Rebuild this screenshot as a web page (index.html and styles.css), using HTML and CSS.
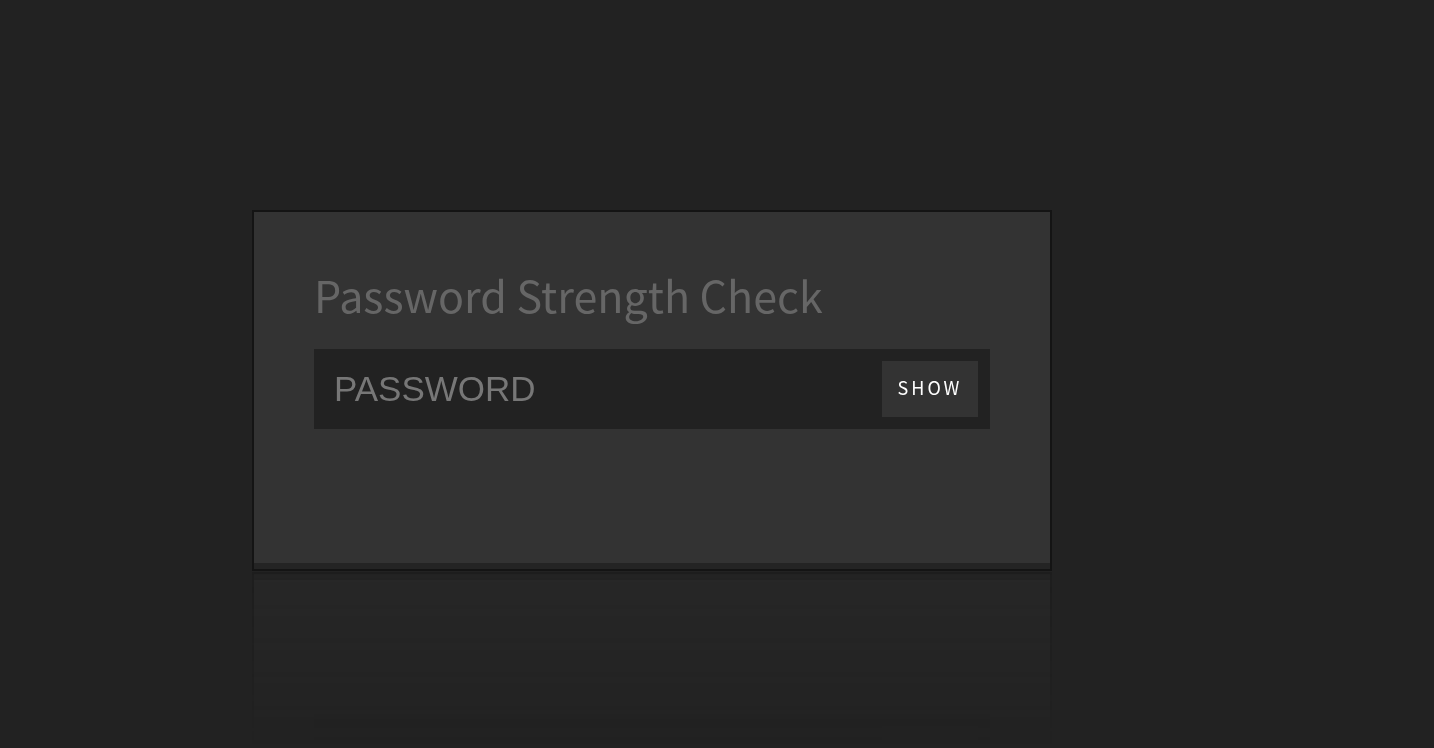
FILE: index.html
```html
<!DOCTYPE html>
<html lang="en">
<head>
<meta charset="utf-8">
<title>Password Strength Check</title>
<link rel="stylesheet" href="styles.css">
</head>
<body>
<div class="card">
  <h1 class="title">Password Strength Check</h1>
  <div class="field">
    <input class="input" type="password" placeholder="PASSWORD">
    <button class="show" type="button">SHOW</button>
  </div>
  <div class="spacer"></div>
  <div class="meter"></div>
</div>
</body>
</html>
```

FILE: styles.css
```css
html, body {
  margin: 0;
  padding: 0;
  background: #222222;
  height: 100%;
  overflow: hidden;
}
body {
  padding: 210px 0 0 252px;
  box-sizing: border-box;
}
.card {
  width: 800px;
  box-sizing: border-box;
  border: 2px solid #141414;
  background: #333333;
  padding: 56px 0 0;
  display: flex;
  flex-direction: column;
  -webkit-box-reflect: below 1px linear-gradient(transparent 52%, rgba(255,255,255,0.3));
}
.title {
  margin: 0 60px 29px 60px;
  font-family: "Noto Sans CJK KR", "Open Sans", sans-serif;
  font-weight: 400;
  font-size: 43px;
  line-height: 52px;
  color: #666666;
}
.field {
  margin: 0 60px;
  height: 80px;
  background: #222222;
  display: flex;
  align-items: center;
  padding: 0 12px 0 20px;
  box-sizing: border-box;
}
.input {
  flex: 1;
  min-width: 0;
  background: transparent;
  border: 0;
  outline: none;
  padding: 0;
  font-family: "Liberation Sans", Arial, sans-serif;
  font-size: 35px;
  color: #777777;
}
.input::placeholder {
  color: #777777;
}
.show {
  width: 96px;
  height: 56px;
  border: 0;
  padding: 0 0 4px 0;
  background: #333333;
  color: #ffffff;
  font-family: "Noto Sans CJK KR", "Open Sans", sans-serif;
  font-size: 18px;
  letter-spacing: 3px;
}
.spacer {
  height: 134px;
}
.meter {
  height: 6px;
  background: #242424;
}
```
